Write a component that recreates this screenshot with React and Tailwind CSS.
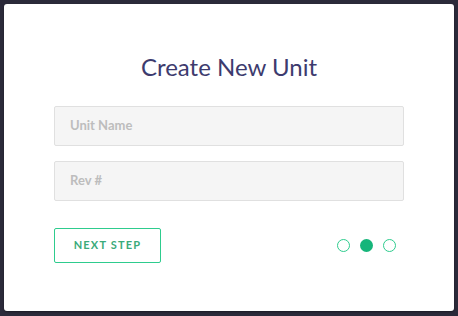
export default function App() {
  return (
    <div className="w-[458px] h-[316px] bg-[#2b2a3a] p-[4px] pb-[5px]" style={{ fontFamily: "Lato, 'Noto Sans', sans-serif" }}>
      <div className="w-[450px] h-[307px] bg-white rounded-[3px] shadow-[0_1px_2px_rgba(0,0,0,0.4)] flex flex-col px-[50px]">
        <h1 className="mt-[45px] text-center text-[24px] leading-[36px] text-[#3d3b6e] font-normal">Create New Unit</h1>
        <div className="mt-[21px] flex flex-col gap-[15px]">
          <div className="h-[40px] bg-[#f5f5f5] border border-[#e0e0e0] rounded-[2px] flex items-center px-[15px] text-[13px] font-bold text-[#bdbdbd]">Unit Name</div>
          <div className="h-[40px] bg-[#f5f5f5] border border-[#e0e0e0] rounded-[2px] flex items-center px-[15px] text-[13px] font-bold text-[#bdbdbd]">Rev #</div>
        </div>
        <div className="mt-[27px] flex items-center justify-between">
          <button className="w-[107px] h-[35px] border border-[#2ecc8e] rounded-[2px] text-[11px] font-bold tracking-[1.2px] text-[#3aaa7a] bg-white">NEXT STEP</button>
          <div className="flex items-center gap-[10px] mr-[8px]">
            <span className="w-[13px] h-[13px] rounded-full border border-[#2ecc8e]" />
            <span className="w-[13px] h-[13px] rounded-full bg-[#16b57a]" />
            <span className="w-[13px] h-[13px] rounded-full border border-[#2ecc8e]" />
          </div>
        </div>
      </div>
    </div>
  );
}
